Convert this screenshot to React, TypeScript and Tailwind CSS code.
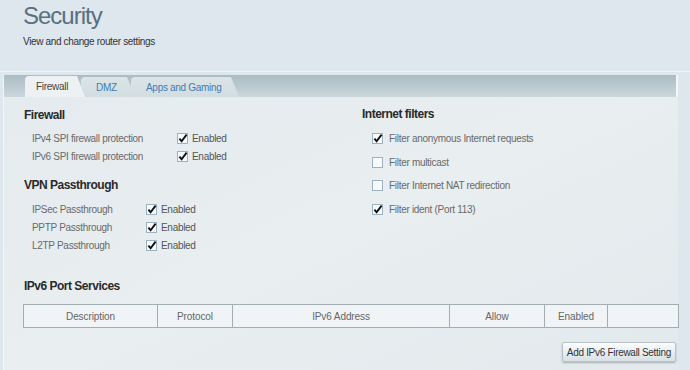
import { FC } from 'react';

type CheckProps = { checked?: boolean };

const Check: FC<CheckProps> = ({ checked }) => (
  <svg width="11" height="11" viewBox="0 0 11 11" className="shrink-0">
    <rect x="0.5" y="0.5" width="10" height="10" fill="#f7fafb" stroke="#9db2c0" />
    {checked && <path d="M2.4 5.6 L4.6 8.2 L9.6 1.6" fill="none" stroke="#111" strokeWidth="1.9" />}
  </svg>
);

const fwRows = ['IPv4 SPI firewall protection', 'IPv6 SPI firewall protection'];
const vpnRows = ['IPSec Passthrough', 'PPTP Passthrough', 'L2TP Passthrough'];
const filters = [
  { label: 'Filter anonymous Internet requests', on: true },
  { label: 'Filter multicast', on: false },
  { label: 'Filter Internet NAT redirection', on: false },
  { label: 'Filter ident (Port 113)', on: true },
];

const cols = [
  { name: 'Description', w: 'w-[134px]' },
  { name: 'Protocol', w: 'w-[75px]' },
  { name: 'IPv6 Address', w: 'w-[217px]' },
  { name: 'Allow', w: 'w-[95px]' },
  { name: 'Enabled', w: 'w-[63px]' },
  { name: '', w: 'flex-1' },
];

export default function App() {
  return (
    <div className="w-[690px] h-[370px] overflow-hidden bg-[#dee7ed] font-['Liberation_Sans',Arial,sans-serif]">
      {/* page header */}
      <div className="h-[72px] box-border border-b border-[#eef3f6] pl-[23px] pt-[2px]">
        <h1 className="text-[24px] leading-[28px] tracking-[-1px] text-[#5a6f7f]">Security</h1>
        <p className="mt-[5px] text-[10px] leading-[14px] tracking-[-0.35px] text-[#333]">View and change router settings</p>
      </div>

      <div className="ml-[3px] w-[675px] mt-[3px] border-l border-[#f2f6f8] bg-gradient-to-br from-[#e4ebee] via-[#e9eef0] to-[#e2e9ec]">
        {/* tab strip */}
        <div className="h-[22px] flex items-end pl-[21px] bg-gradient-to-b from-[#aabcc3] to-[#cbd7db] border-r-2 border-[#f4f7f8]">
          <div className="relative z-20 w-[60px] h-[21px] flex items-center pl-[11px] rounded-tl-[4px] bg-[#edf1f3] text-[10px] tracking-[-0.3px] text-[#444] [clip-path:polygon(0_0,52px_0,60px_100%,0_100%)]">
            Firewall
          </div>
          <div className="relative z-10 -ml-[4px] w-[54px] h-[20px] flex items-center pl-[15px] rounded-tl-[4px] bg-gradient-to-b from-[#dbe5e8] to-[#d2dde1] text-[10px] tracking-[-0.3px] text-[#3f7db0] [clip-path:polygon(0_0,46px_0,54px_100%,0_100%)]">
            DMZ
          </div>
          <div className="-ml-[4px] w-[108px] h-[20px] flex items-center pl-[15px] rounded-tl-[4px] bg-gradient-to-b from-[#dbe5e8] to-[#d2dde1] text-[10px] tracking-[-0.3px] text-[#3f7db0] [clip-path:polygon(0_0,100px_0,108px_100%,0_100%)]">
            Apps and Gaming
          </div>
        </div>

        <div className="pl-[20px] pt-[11px] pb-[20px]">
          <div className="flex">
            {/* left column */}
            <div className="w-[338px]">
              <h2 className="text-[12px] leading-[14px] tracking-[-0.5px] font-bold text-[#2a2a2a]">Firewall</h2>
              <div className="mt-[7px]">
                {fwRows.map((r) => (
                  <div key={r} className="flex items-center h-[18px] pl-[8px] text-[10px] tracking-[-0.3px] text-[#6a6a6a]">
                    <span className="w-[145px]">{r}</span>
                    <Check checked />
                    <span className="ml-[4px] text-[#555]">Enabled</span>
                  </div>
                ))}
              </div>

              <h2 className="mt-[13px] text-[12px] leading-[14px] tracking-[-0.5px] font-bold text-[#2a2a2a]">VPN Passthrough</h2>
              <div className="mt-[8px]">
                {vpnRows.map((r) => (
                  <div key={r} className="flex items-center h-[18px] pl-[8px] text-[10px] tracking-[-0.3px] text-[#6a6a6a]">
                    <span className="w-[114px]">{r}</span>
                    <Check checked />
                    <span className="ml-[4px] text-[#555]">Enabled</span>
                  </div>
                ))}
              </div>
            </div>

            {/* right column */}
            <div>
              <h2 className="-mt-px text-[12px] leading-[14px] tracking-[-0.5px] font-bold text-[#2a2a2a]">Internet filters</h2>
              <div className="mt-[6px] pl-[10px]">
                {filters.map((f) => (
                  <div key={f.label} className="flex items-center h-[23.5px] text-[10px] tracking-[-0.3px] text-[#6a6a6a]">
                    <Check checked={f.on} />
                    <span className="ml-[6px]">{f.label}</span>
                  </div>
                ))}
              </div>
            </div>
          </div>

          <h2 className="mt-[25px] text-[12px] leading-[14px] tracking-[-0.5px] font-bold text-[#2a2a2a]">IPv6 Port Services</h2>
          <div className="mt-[11px] -ml-px w-[656px] h-[24px] flex border border-[#a3adb2] bg-[#f1f4f6]">
            {cols.map((c, i) => (
              <div
                key={i}
                className={`${c.w} flex items-center justify-center text-[10px] tracking-[-0.1px] text-[#666] ${i < cols.length - 1 ? 'border-r border-[#a3adb2]' : ''}`}
              >
                {c.name}
              </div>
            ))}
          </div>

          <div className="flex justify-end mt-[14px] pr-[2px]">
            <button className="h-[20px] px-[4px] text-[10px] tracking-[-0.3px] text-[#333] border border-[#b7c3c9] rounded-[2px] bg-gradient-to-b from-[#fbfcfd] to-[#d8e1e6] shadow-[0_1px_2px_rgba(0,0,0,0.25)]">
              Add IPv6 Firewall Setting
            </button>
          </div>
        </div>
      </div>
    </div>
  );
}
